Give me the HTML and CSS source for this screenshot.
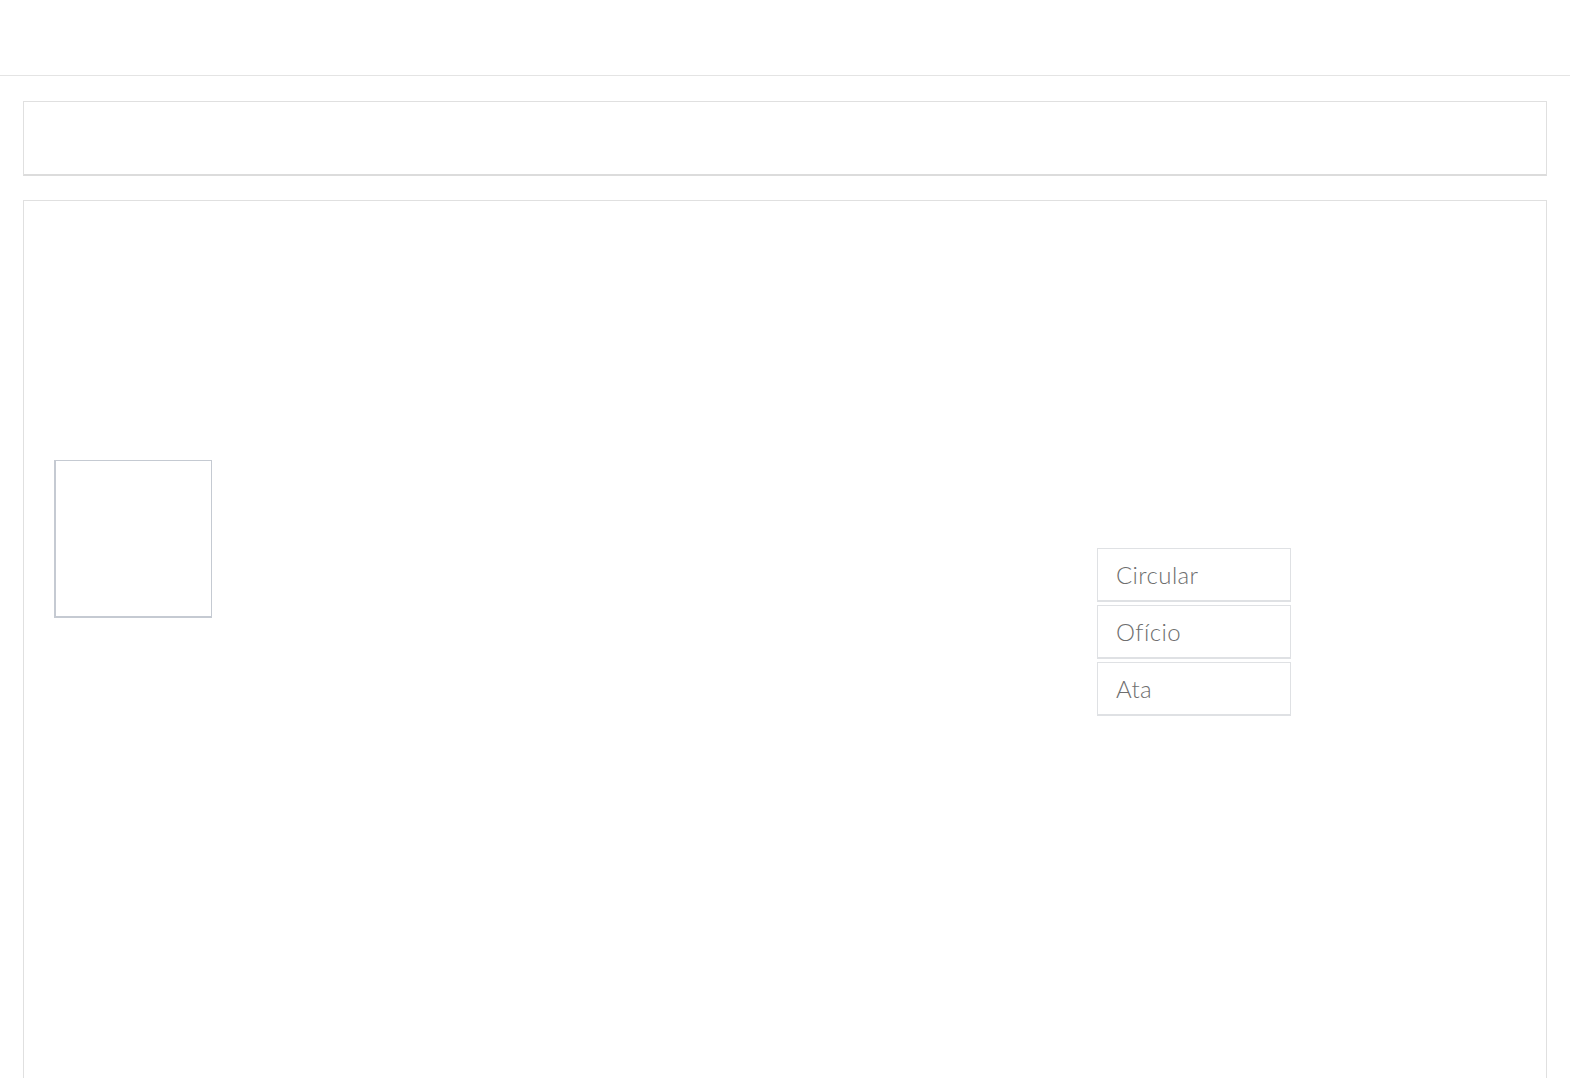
FILE: index.html
```html
<!DOCTYPE html>
<html lang="pt">
<head>
<meta charset="utf-8">
<title>Documentos</title>
<link rel="stylesheet" href="styles.css">
</head>
<body>
<header class="topbar"></header>
<main class="content">
  <section class="panel panel-top"></section>
  <section class="panel panel-main">
    <div class="thumb"></div>
    <ul class="doc-list">
      <li class="doc-item">Circular</li>
      <li class="doc-item">Ofício</li>
      <li class="doc-item">Ata</li>
    </ul>
  </section>
</main>
</body>
</html>
```

FILE: styles.css
```css
html, body {
  margin: 0;
  padding: 0;
  background: #ffffff;
  font-family: Lato, "Open Sans", "Liberation Sans", sans-serif;
  overflow: hidden;
}
.topbar {
  height: 75px;
  border-bottom: 1px solid #e4e4e4;
}
.content {
  padding: 25px 23px 0 23px;
  display: flex;
  flex-direction: column;
  gap: 24px;
}
.panel {
  border: 1px solid #e0e0e0;
  box-sizing: border-box;
}
.panel-top {
  height: 75px;
  border-bottom: 2px solid #dcdcdc;
}
.panel-main {
  height: 1000px;
  display: flex;
  align-items: flex-start;
  padding-left: 30px;
}
.thumb {
  width: 158px;
  height: 158px;
  box-sizing: border-box;
  border: 1px solid #c5cad2;
  border-left-width: 2px;
  border-bottom-width: 2px;
  margin-top: 259px;
}
.doc-list {
  list-style: none;
  margin: 347px 0 0 885px;
  padding: 0;
  display: flex;
  flex-direction: column;
  gap: 3px;
  width: 194px;
}
.doc-item {
  box-sizing: border-box;
  height: 54px;
  border: 1px solid #dfe1e4;
  border-bottom-width: 2px;
  padding: 0 0 0 18px;
  display: flex;
  align-items: center;
  font-size: 24px;
  font-weight: 300;
  letter-spacing: 0.4px;
  color: #6e6e6e;
}
```
